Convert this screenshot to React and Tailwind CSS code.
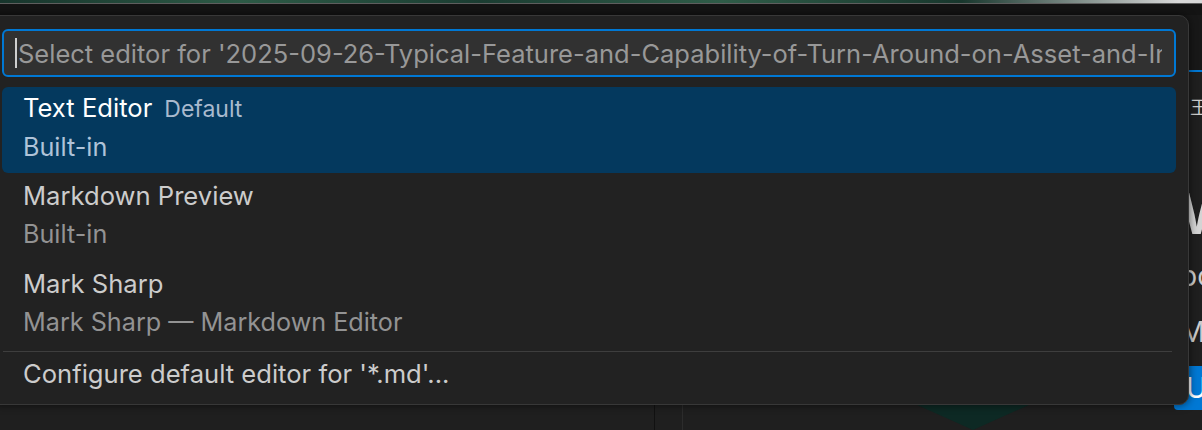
import React from 'react'

const FONT = { fontFamily: 'Inter, "Noto Sans", "Liberation Sans", sans-serif' }

const items = [
  { label: 'Text Editor', tag: 'Default', desc: 'Built-in', selected: true },
  { label: 'Markdown Preview', desc: 'Built-in' },
  { label: 'Mark Sharp', desc: 'Mark Sharp — Markdown Editor' },
]

function Row({ item }) {
  return (
    <div className="h-[88px]">
      <div className={`h-[86px] rounded-[6px] pl-[21px] pt-[2px] ${item.selected ? 'bg-[#04395e]' : ''}`}>
        <div className="flex items-baseline leading-[38px]">
          <span className={`text-[25.6px] ${item.selected ? 'text-white' : 'text-[#cccccc]'}`}>{item.label}</span>
          {item.tag && <span className="ml-[12px] text-[23px] text-[#a9bace]">{item.tag}</span>}
        </div>
        <div className={`text-[25.2px] leading-[38px] ${item.selected ? 'text-[#afc3d8]' : 'text-[#939393]'}`}>{item.desc}</div>
      </div>
    </div>
  )
}

export default function App() {
  return (
    <div className="relative w-[1202px] h-[430px] overflow-hidden bg-[#1f1f1f] flex flex-col" style={FONT}>
      {/* window behind */}
      <div className="h-[3px] bg-[linear-gradient(90deg,#17352c,#2d5a46_20%,#1b3d32_40%,#2f5c48_60%,#18372d_80%,#d8d8d8_98%)]" />
      <div className="h-[1px] bg-[#5e5e5e]" />
      <div className="h-[11px] bg-[#141414]" />
      <div className="flex-1 flex">
        <div className="w-[655px] border-r border-[#111111]" />
        <div className="w-[28px] border-r border-[#2c2c2c]" />
        <div className="relative flex-1">
          <svg className="absolute left-[232px] bottom-0" width="116" height="26" viewBox="0 0 116 26">
            <polygon points="0,0 116,0 58,26" fill="#0d2924" />
          </svg>
        </div>
        <div className="w-[28px] flex flex-col overflow-hidden">
          <div className="h-[55px] bg-[#181818]" />
          <div className="h-[2px] ml-[2px] bg-[#0078d4]" />
          <div className="h-[26px]" />
          <div className="pl-[16px] text-[18px] leading-[16px] text-[#cfcfcf]" style={{ fontFamily: '"Noto Sans CJK SC", sans-serif' }}>王</div>
          <div className="h-[78px]" />
          <div className="pl-[6px] text-[56px] leading-[44px] font-semibold text-[#d4d4d4] whitespace-nowrap">W</div>
          <div className="h-[26px]" />
          <div className="pl-[6px] text-[28px] leading-[28px] text-[#cccccc] whitespace-nowrap">bo</div>
          <div className="h-[28px]" />
          <div className="pl-[6px] text-[28px] leading-[28px] text-[#cccccc] whitespace-nowrap">MM</div>
          <div className="h-[20px]" />
          <div className="h-[44px] rounded-l-[4px] bg-[#0078d4] pl-[12px] text-[28px] leading-[44px] text-white">U</div>
        </div>
      </div>

      {/* quick pick */}
      <div className="absolute left-[-11px] top-[15px] w-[1200px] h-[390px] rounded-[10px] border border-[#383838] bg-[#222222] px-[12px] pt-[13px] shadow-[0_0_8px_rgba(0,0,0,0.6)]">
        <div className="h-[48px] rounded-[6px] border-2 border-[#0078d4] bg-[#313131] flex items-center pl-[11px] pr-[12px] overflow-hidden">
          <div className="w-[2px] h-[30px] bg-[#cfcfcf] shrink-0" />
          <div className="ml-[1px] pt-[2px] text-[25.5px] text-[#989898] whitespace-nowrap overflow-hidden">
            Select editor for '2025-09-26-Typical-Feature-and-Capability-of-Turn-Around-on-Asset-and-Infrastructure.md'
          </div>
        </div>
        <div className="mt-[10px]">
          {items.map(it => <Row key={it.label} item={it} />)}
          <div className="h-[1px] mx-[1px] mr-[4px] bg-[#3e3e3e]" />
          <div className="pl-[21px] pt-[3px] text-[25.6px] leading-[38px] text-[#cccccc]">Configure default editor for '*.md'...</div>
        </div>
      </div>
    </div>
  )
}
